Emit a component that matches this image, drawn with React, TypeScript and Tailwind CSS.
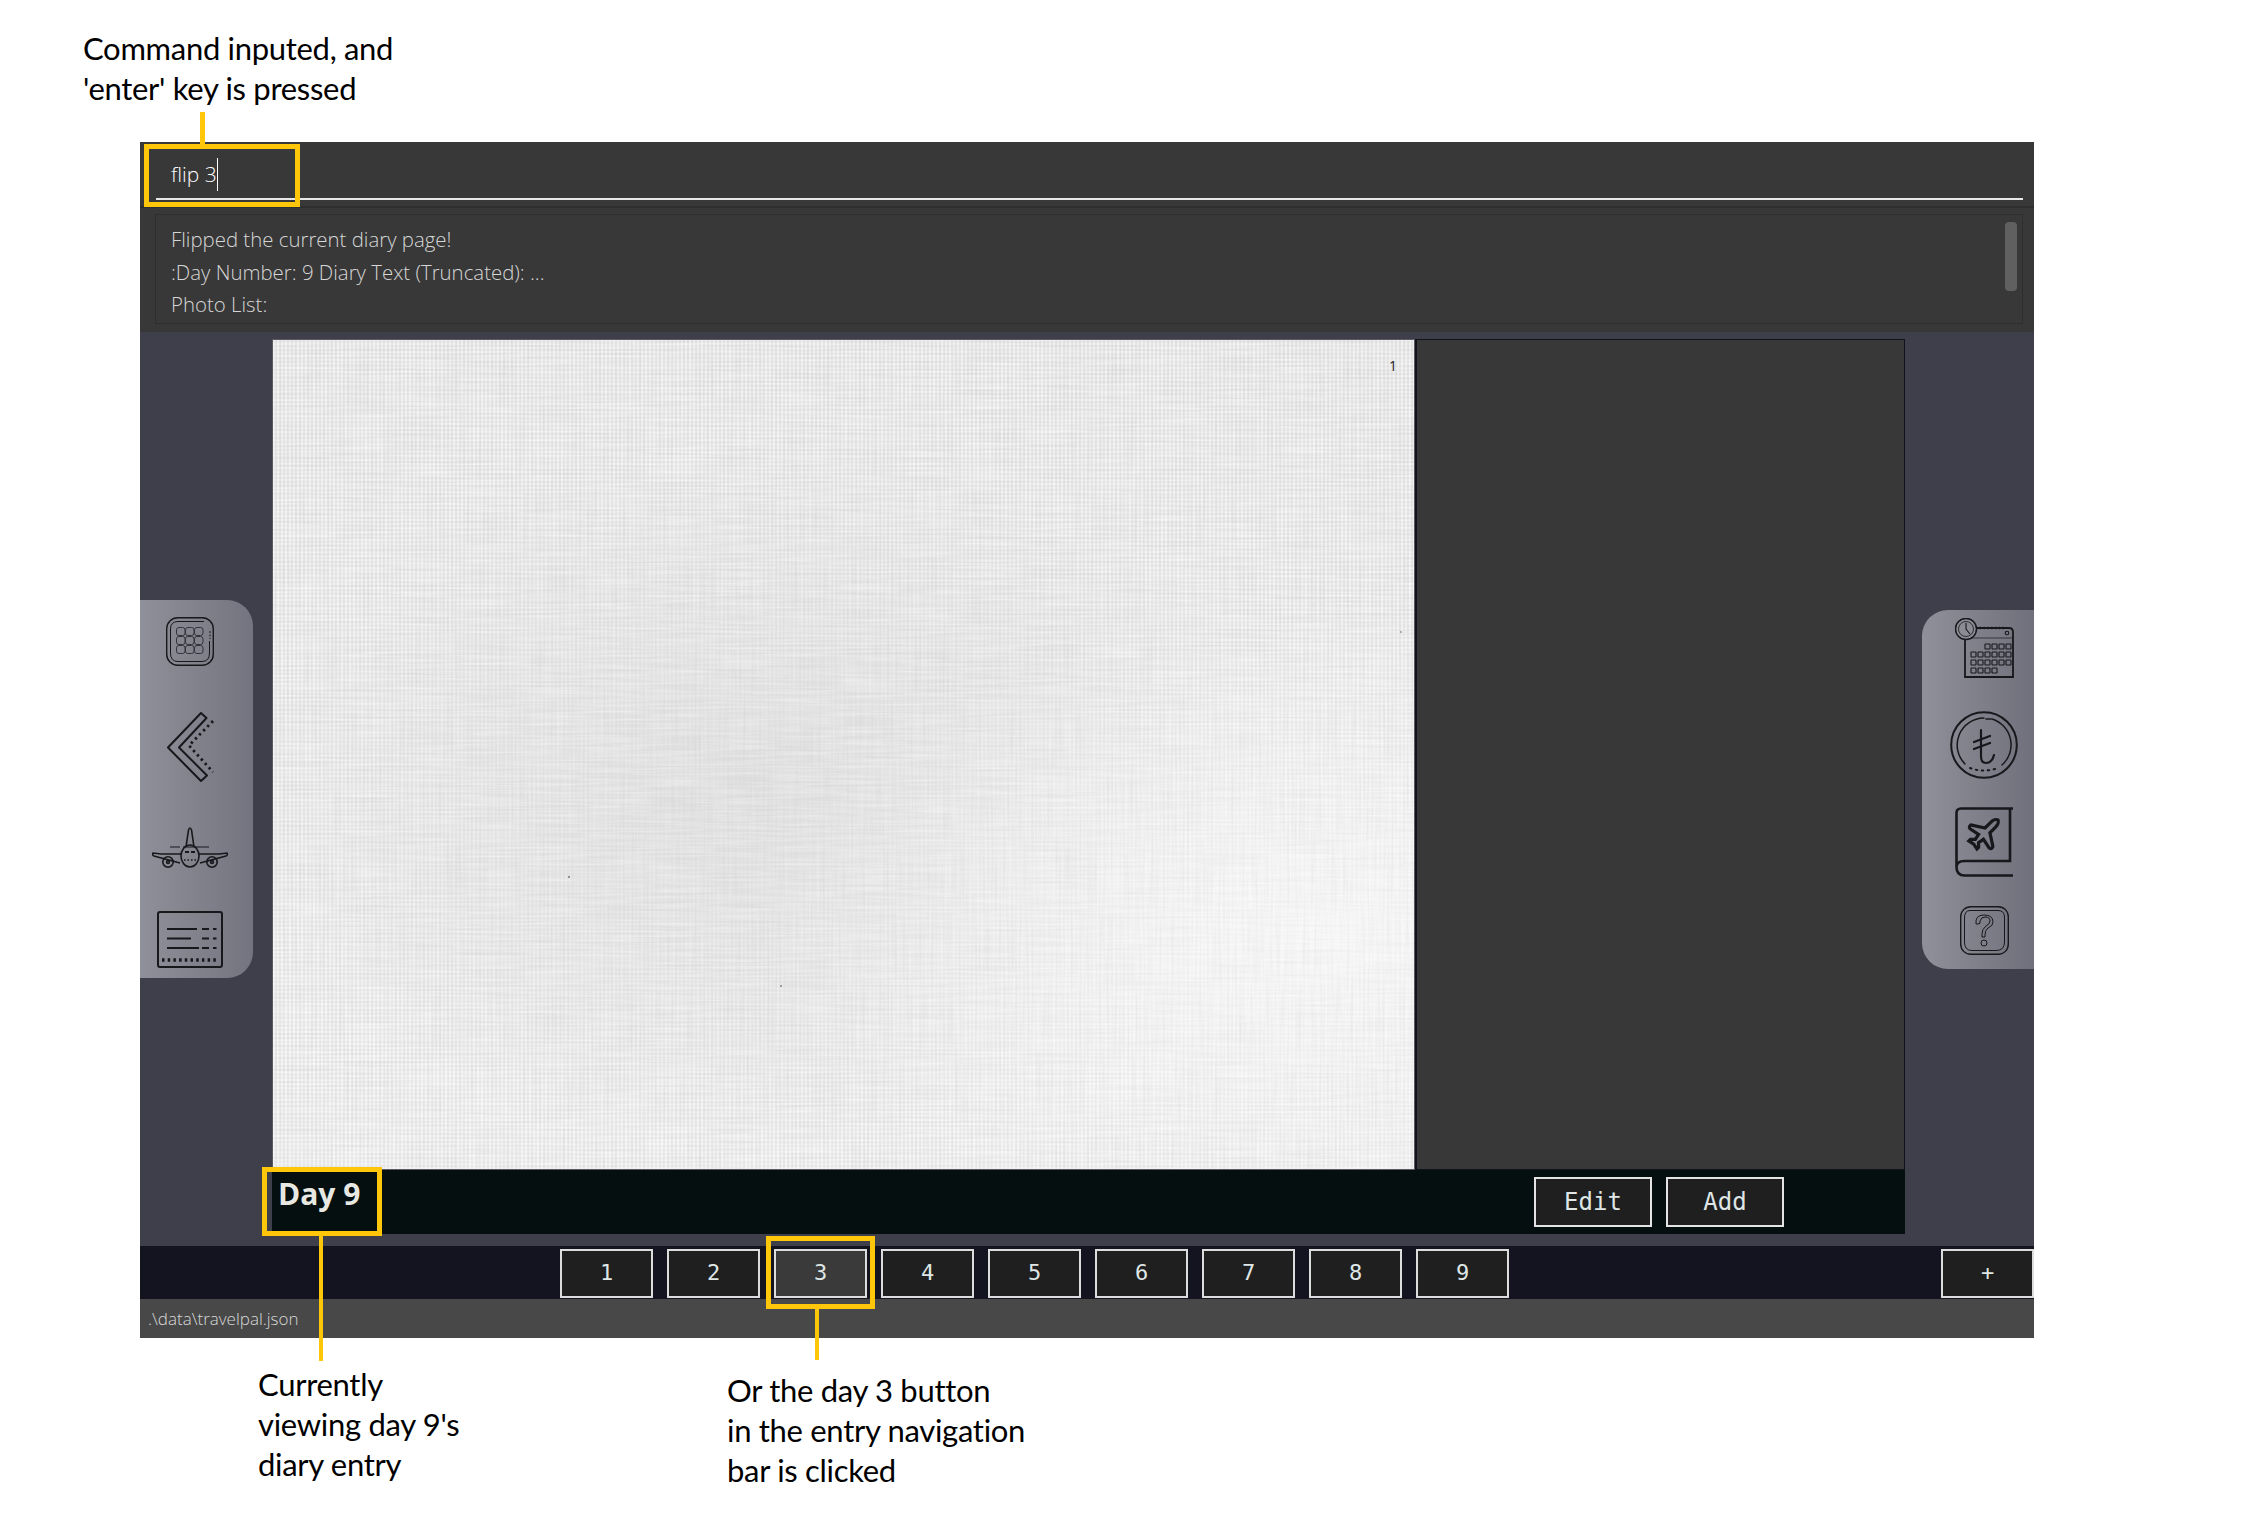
const DAYS = [1, 2, 3, 4, 5, 6, 7, 8, 9];

const ink = '#17171c';

function GridIcon() {
  return (
    <svg width="48" height="49" viewBox="0 0 48 49" fill="none" stroke={ink} strokeWidth="1">
      <rect x="0.700" y="0.700" width="46.600" height="47.600" rx="11" strokeWidth="1.400" />
      <path d="M38 4.500H12Q4.500 4.500 4.500 12V36Q4.500 44.500 12 44.500H36Q43.500 44.500 43.500 36V24" />
      <path d="M44 14v8" strokeDasharray="2 1.500" />
      {[10.500, 19.500, 28.500].map((x) =>
        [10.500, 19.500, 28.500].map((y) => (
          <rect key={`${x}-${y}`} x={x} y={y} width="8.500" height="8" rx="2.400" stroke="#33333b" />
        ))
      )}
    </svg>
  );
}

function BackIcon() {
  return (
    <svg width="47" height="71" viewBox="0 0 47 71" fill="none" stroke={ink}>
      <path d="M34 1 1 35.500 34 69l6-5.500L12 35.500 39.500 6Z" strokeWidth="2" strokeLinejoin="round" />
      <path d="M46 9 22 33.500 46 60" strokeWidth="2.800" strokeDasharray="2.400 3.400" />
    </svg>
  );
}

function PlaneIcon() {
  return (
    <svg width="76" height="42" viewBox="0 0 76 42" fill="none" stroke={ink} strokeWidth="1.600">
      <path d="M34 20 36.500 3q1.500-4 3 0L42 20" />
      <ellipse cx="38" cy="29" rx="9" ry="11" />
      <path d="M29 27 9 27 1 26q-1 2 1 3l26 7M47 27l20 0 8-1q1 2-1 3l-26 7" />
      <circle cx="16" cy="35" r="5.200" />
      <circle cx="16" cy="35" r="1.400" />
      <circle cx="60" cy="35" r="5.200" />
      <circle cx="60" cy="35" r="1.400" />
      <path d="M18 20h40" strokeDasharray="10 3 26 3" strokeWidth="1" />
      <path d="M33 25h4M39 25h4" strokeWidth="2" />
      <path d="M32 33h12" strokeDasharray="1.500 2" />
    </svg>
  );
}

function ListIcon() {
  return (
    <svg width="66" height="57" viewBox="0 0 66 57" fill="none" stroke={ink}>
      <rect x="1" y="1" width="64" height="55" rx="2" strokeWidth="2" />
      <path d="M10 18h30M10 27.500h24M10 37h32" strokeWidth="2" />
      <path d="M45 18h7M56 18h3.500M45 27.500h7M56 27.500h3.500M45 37h7M56 37h3.500" strokeWidth="2" />
      <path d="M5 49h56" strokeWidth="3.500" strokeDasharray="2.500 3.200" />
    </svg>
  );
}

function CalendarIcon() {
  const rows = [
    { y: 26, from: 2 },
    { y: 34, from: 0 },
    { y: 42, from: 0 },
    { y: 50, from: 0, to: 4 },
  ];
  return (
    <svg width="59" height="60" viewBox="0 0 59 60" fill="none" stroke={ink} strokeWidth="1.100">
      <path d="M18 10h36q4 0 4 4v45H10V22" strokeWidth="1.800" />
      <path d="M21 10h28" strokeWidth="2.400" strokeDasharray="1.200 2.600" />
      <path d="M10 20h48" strokeWidth="0.700" />
      <circle cx="52" cy="15" r="1.800" />
      <circle cx="11" cy="11" r="10.500" fill="#8b8b93" strokeWidth="1.500" />
      <circle cx="11" cy="11" r="7.500" strokeWidth="0.800" />
      <path d="M11 5v6l4 5" />
      {rows.map((r) =>
        [0, 1, 2, 3, 4, 5].slice(r.from, r.to ?? 6).map((c) => (
          <rect key={`${r.y}-${c}`} x={16 + c * 7} y={r.y} width="5" height="5" rx="0.500" />
        ))
      )}
    </svg>
  );
}

function CoinIcon() {
  return (
    <svg width="68" height="68" viewBox="0 0 68 68" fill="none" stroke={ink} strokeLinecap="round">
      <circle cx="34" cy="34" r="32.800" strokeWidth="2" />
      <path d="M42 8A27 27 0 0 1 52 54" strokeWidth="1.500" />
      <path d="M34 7A27 27 0 0 0 15 53" strokeWidth="1.500" />
      <path d="M36 8 41 8" strokeWidth="1.500" />
      <path d="M20 57q14 5 28 0" strokeWidth="2" strokeDasharray="1.500 4.500" />
      <path d="M31 19v26q0 7 5 7 6 0 8-8M24 31l16-6M24 38l16-6" strokeWidth="2.200" />
    </svg>
  );
}

function TravelBookIcon() {
  return (
    <svg width="58" height="70" viewBox="0 0 58 70" fill="none" stroke={ink}>
      <path d="M58 1.500H6Q1.500 1.500 1.500 6V60q0 8.500 8 8.500H58M1.500 60q0-6 8-6H55V1.500" strokeWidth="2.600" />
      <g transform="translate(9 8) scale(1.620)">
        <path
          d="M17.800 19.200 16 11l3.500-3.500C21 6 21.500 4 21 3c-1-.5-3 0-4.500 1.500L13 8 4.800 6.200c-.5-.1-.9.1-1.100.5l-.3.500c-.2.500-.1 1 .3 1.300L9 12l-2 3H4l-1 1 3 2 2 3 1-1v-3l3-2 3.500 5.300c.3.400.8.500 1.300.3l.5-.2c.4-.3.6-.7.500-1.200z"
          strokeWidth="2"
        />
      </g>
    </svg>
  );
}

function HelpIcon() {
  return (
    <svg width="49" height="49" viewBox="0 0 49 49" fill="none" stroke={ink} strokeWidth="1">
      <rect x="0.700" y="0.700" width="47.600" height="47.600" rx="10" strokeWidth="1.400" />
      <path d="M10 4.500H38Q44.500 4.500 44.500 11V36Q44.500 44.500 36 44.500H12Q4.500 44.500 4.500 36V12Q4.500 4.500 10 4.500" />
      <path d="M16 18q-1-9 8-9 9 0 9 7 0 4-5 6-3 2-3 7v2l-3 0v-3q0-5 4-8 4-2 4-5 0-4-5-4-4 0-5 4 1 3-2 3-2 0-2 0Z" />
      <circle cx="24" cy="37" r="3" />
    </svg>
  );
}

// linen weave of the diary page
function PaperTexture() {
  return (
    <svg className="absolute inset-0 h-full w-full" aria-hidden="true">
      <defs>
        <filter id="warp" x="0" y="0" width="100%" height="100%">
          <feTurbulence type="fractalNoise" baseFrequency="0.42 0.014" numOctaves="2" seed="4" />
          <feColorMatrix values="0 0 0 0 0.45  0 0 0 0 0.45  0 0 0 0 0.45  1.500 0 0 0 -0.560" />
        </filter>
        <filter id="weft" x="0" y="0" width="100%" height="100%">
          <feTurbulence type="fractalNoise" baseFrequency="0.016 0.42" numOctaves="2" seed="9" />
          <feColorMatrix values="0 0 0 0 1  0 0 0 0 1  0 0 0 0 1  1.900 0 0 0 -0.650" />
        </filter>
        <filter id="weftDark" x="0" y="0" width="100%" height="100%">
          <feTurbulence type="fractalNoise" baseFrequency="0.012 0.38" numOctaves="2" seed="21" />
          <feColorMatrix values="0 0 0 0 0.5  0 0 0 0 0.5  0 0 0 0 0.5  1.200 0 0 0 -0.470" />
        </filter>
      </defs>
      <g opacity="0.22">
        <rect width="100%" height="100%" filter="url(#warp)" />
        <rect width="100%" height="100%" filter="url(#weftDark)" />
      </g>
      <rect width="100%" height="100%" filter="url(#weft)" opacity="0.35" />
      <circle cx="296" cy="537" r="1" fill="#777" />
      <circle cx="508" cy="646" r="1" fill="#888" />
      <circle cx="1128" cy="292" r="1" fill="#999" />
    </svg>
  );
}

function NavButton({ label, active }: { label: string; active?: boolean }) {
  return (
    <button
      className={`flex h-[49px] w-[93px] items-center justify-center border-2 border-[#dcdcdc] font-['DejaVu_Sans_Mono',monospace] text-[22px] text-[#dfe6e6] ${
        active ? 'bg-[#3a3a3a]' : 'bg-[#1f1f1f]'
      }`}
    >
      {label}
    </button>
  );
}

function ActionButton({ label }: { label: string }) {
  return (
    <button className="flex h-[50px] w-[118px] items-center justify-center border-2 border-[#e4e4e4] bg-[#1f1f1f] font-['DejaVu_Sans_Mono',monospace] text-[24px] text-[#dfe6e6]">
      {label}
    </button>
  );
}

export default function App() {
  return (
    <div className="relative h-[1514px] w-[2246px] overflow-hidden bg-white font-['Lato',sans-serif] text-[31px] leading-[40px] text-black">
      <div className="pl-[83px] pt-[28px] tracking-[-0.3px]">
        <p>Command inputed, and</p>
        <p>'enter' key is pressed</p>
      </div>

      <div className="ml-[140px] mt-[34px] flex h-[1196px] w-[1894px] flex-col bg-[#3f3f4b] font-['Open_Sans',sans-serif]">
        {/* command box */}
        <div className="h-[66px] border-b-2 border-[#2e2e2e] bg-[#383838] pl-[16px] pr-[11px]">
          <div className="flex h-[58px] items-center border-b-2 border-[#e8e8e8] pl-[15px] pt-[9px] text-[21px] font-light leading-none text-white">
            <span>flip 3</span>
            <span className="h-[33px] w-px bg-white" />
          </div>
        </div>

        {/* result display */}
        <div className="h-[124px] bg-[#383838] pb-[7px] pl-[15px] pr-[11px] pt-[6px]">
          <div className="relative h-[110px] border border-[#2e2e2e] px-[15px] py-[8px] text-[20.400px] font-light leading-[32.500px] text-[#d6d6d6]">
            <p>Flipped the current diary page!</p>
            <p>:Day Number: 9 Diary Text (Truncated): ...</p>
            <p>Photo List:</p>
            <div className="absolute right-[5px] top-[7px] h-[69px] w-[12px] rounded-[4px] bg-[#606060]" />
          </div>
        </div>

        <div className="flex h-[914px] items-center">
          {/* left sidebar */}
          <div className="w-[132px]">
            <div className="flex h-[378px] w-[113px] flex-col items-center rounded-r-[26px] bg-gradient-to-r from-[#90909a] to-[#747480] pr-[13px] pt-[17px]">
              <GridIcon />
              <div className="mt-[46px]">
                <BackIcon />
              </div>
              <div className="mt-[44px]">
                <PlaneIcon />
              </div>
              <div className="mt-[42px]">
                <ListIcon />
              </div>
            </div>
          </div>

          {/* diary */}
          <div className="flex h-full w-[1633px] flex-col pt-[7px]">
            <div className="flex h-[831px]">
              <div className="relative w-[1143px] border border-[#5a5a60] bg-[#ebebeb] bg-[radial-gradient(ellipse_at_92%_72%,#f8f8f8_0%,rgba(248,248,248,0)_38%),radial-gradient(ellipse_at_42%_55%,#e0e0e0_0%,rgba(224,224,224,0)_55%),repeating-linear-gradient(90deg,rgba(255,255,255,0.35)_0px,rgba(255,255,255,0.35)_2px,rgba(180,180,180,0.1)_2px,rgba(180,180,180,0.1)_4px),repeating-linear-gradient(0deg,rgba(255,255,255,0.25)_0px,rgba(255,255,255,0.25)_2px,rgba(180,180,180,0.08)_2px,rgba(180,180,180,0.08)_4px),linear-gradient(180deg,#e6e6e6_0%,#eeeeee_100%)]">
                <PaperTexture />
                <span className="absolute right-[17px] top-[19px] text-[14px] leading-none text-[#222]">1</span>
              </div>
              <div className="flex-1 border border-l-2 border-[#10131a] bg-[#383838]" />
            </div>
            <div className="flex h-[64px] items-start justify-between bg-[#050f0f] pl-[6px] pr-[121px]">
              <span className="text-[30px] font-bold leading-[47px] text-[#e8e8e2]">Day 9</span>
              <div className="flex gap-[14px] pt-[7px]">
                <ActionButton label="Edit" />
                <ActionButton label="Add" />
              </div>
            </div>
          </div>

          {/* right sidebar */}
          <div className="flex flex-1 justify-end">
            <div className="flex h-[359px] w-[112px] flex-col items-center rounded-l-[26px] bg-gradient-to-r from-[#90909a] to-[#70707c] pl-[12px] pt-[8px]">
              <CalendarIcon />
              <div className="mt-[33px]">
                <CoinIcon />
              </div>
              <div className="mt-[28px]">
                <TravelBookIcon />
              </div>
              <div className="mt-[29px]">
                <HelpIcon />
              </div>
            </div>
          </div>
        </div>

        {/* entry navigation */}
        <div className="flex h-[53px] items-center bg-[#13141f] pl-[420px] pt-px">
          <div className="flex gap-[14px]">
            {DAYS.map((day) => (
              <NavButton key={day} label={String(day)} active={day === 3} />
            ))}
          </div>
          <div className="ml-auto">
            <NavButton label="+" />
          </div>
        </div>

        {/* status bar */}
        <div className="flex h-[39px] items-center bg-[#484848] pl-[8px] text-[17px] font-light text-[#d8d8d8]">
          .\data\travelpal.json
        </div>
      </div>

      <div className="relative mt-[26px] h-[130px]">
        <div className="absolute left-[258px] top-0 tracking-[-0.3px]">
          <p>Currently</p>
          <p>viewing day 9's</p>
          <p>diary entry</p>
        </div>
        <div className="absolute left-[727px] top-[6px] tracking-[-0.3px]">
          <p>Or the day 3 button</p>
          <p>in the entry navigation</p>
          <p>bar is clicked</p>
        </div>
      </div>

      {/* yellow callouts over the app */}
      <div className="absolute left-[144px] top-[144px] h-[63px] w-[156px] border-[5px] border-[#ffc60a]" />
      <div className="absolute left-[200px] top-[112px] h-[32px] w-[5px] bg-[#ffc60a]" />
      <div className="absolute left-[262px] top-[1167px] h-[69px] w-[120px] border-[5px] border-[#ffc60a]" />
      <div className="absolute left-[319px] top-[1236px] h-[125px] w-[4px] bg-[#ffc60a]" />
      <div className="absolute left-[766px] top-[1236px] h-[73px] w-[109px] border-[5px] border-[#ffc60a]" />
      <div className="absolute left-[815px] top-[1309px] h-[51px] w-[4px] bg-[#ffc60a]" />
    </div>
  );
}
